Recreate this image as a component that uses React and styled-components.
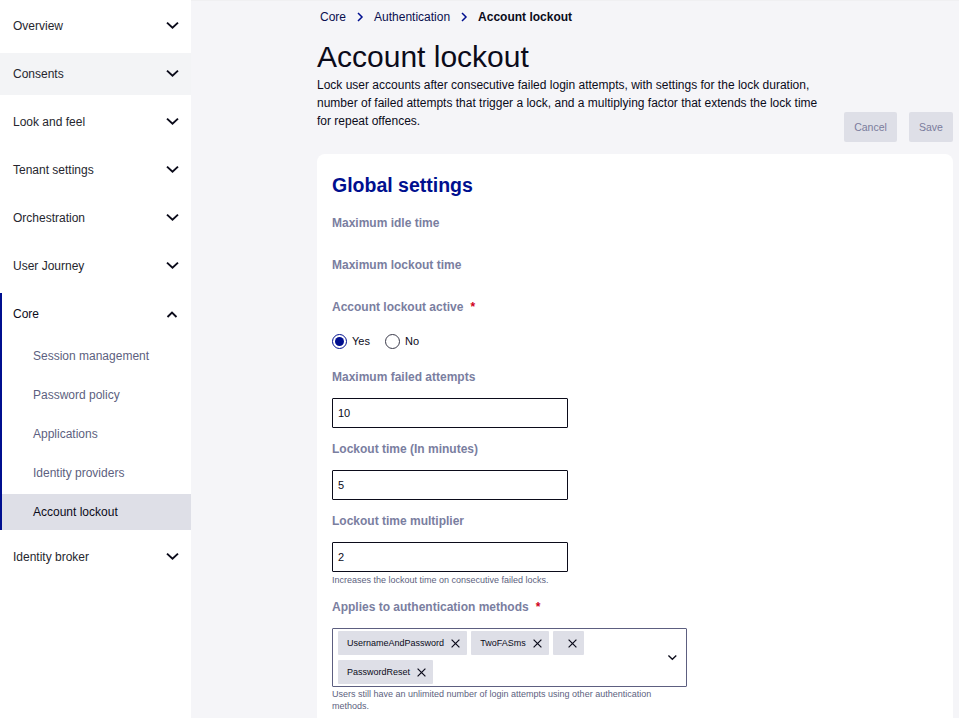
import React from "react";
import styled, { createGlobalStyle } from "styled-components";

const Global = createGlobalStyle`
  html, body { margin: 0; padding: 0; height: 718px; overflow: hidden; background: #f5f5f8; }
  body { font-family: "Liberation Sans", Arial, sans-serif; color: #0b0b1a; }
  * { box-sizing: border-box; }
`;

const Page = styled.div`
  display: flex;
  height: 718px;
  overflow: hidden;
  box-shadow: inset 0 1px 0 #f0f0f2;
`;

const Sidebar = styled.nav`
  width: 191px;
  flex: none;
  background: #fff;
  padding-top: 5px;
  display: flex;
  flex-direction: column;
  gap: 6px;
`;

const NavGroup = styled.div`
  display: flex;
  flex-direction: column;
  gap: ${(p) => (p.$open ? "3px" : "0")};
  border-left: ${(p) => (p.$open ? "2px solid #000f8f" : "none")};
`;

const NavHead = styled.div`
  height: 42px;
  display: flex;
  align-items: center;
  justify-content: space-between;
  padding: 0 12px 0 ${(p) => (p.$open ? "11px" : "13px")};
  font-size: 12px;
  color: ${(p) => (p.$open ? "#0b0b1a" : "#26262e")};
  background: ${(p) => (p.$hover ? "#f3f4f6" : "transparent")};
`;

const SubItem = styled.div`
  height: 36px;
  display: flex;
  align-items: center;
  padding-left: 31px;
  font-size: 12px;
  color: ${(p) => (p.$active ? "#0b0b1a" : "#5d5f80")};
  background: ${(p) => (p.$active ? "#dedfe7" : "transparent")};
`;

const Main = styled.main`
  flex: 1;
  min-width: 0;
  padding: 0 6px 0 126px;
`;

const Crumbs = styled.div`
  display: flex;
  align-items: center;
  height: 34px;
  padding-left: 3px;
  font-size: 12px;
  color: #0a0f4f;
`;

const CrumbSep = styled.span`
  display: flex;
  width: 28px;
  justify-content: center;
`;

const CrumbCurrent = styled.b`
  color: #0b0b1a;
`;

const Title = styled.h1`
  margin: 5px 0 2px;
  font-size: 30px;
  line-height: 35px;
  font-weight: 400;
  color: #0b0b1a;
`;

const Description = styled.p`
  margin: 0;
  font-size: 12px;
  line-height: 18px;
  color: #0b0b1a;
  width: 510px;
`;

const Actions = styled.div`
  display: flex;
  justify-content: flex-end;
  gap: 12px;
  margin-top: -18px;
`;

const ActionButton = styled.button`
  height: 30px;
  width: ${(p) => p.$w}px;
  padding: 0;
  border: none;
  border-radius: 2px;
  background: #dedfe7;
  color: #7a7c9c;
  font: 10.5px "Liberation Sans", Arial, sans-serif;
`;

const Card = styled.section`
  margin-top: 12px;
  background: #fff;
  border-radius: 8px 8px 0 0;
  padding: 20px 15px 0;
  height: 600px;
`;

const CardTitle = styled.h2`
  margin: 0;
  font-size: 19.5px;
  line-height: 23px;
  font-weight: 700;
  color: #000f8f;
`;

const Label = styled.div`
  margin-top: ${(p) => p.$mt ?? 0}px;
  font-size: 12px;
  line-height: 14px;
  font-weight: 700;
  color: #7a7e9f;
`;

const Star = styled.span`
  color: #d0021b;
  margin-left: 7px;
`;

const RadioRow = styled.div`
  display: flex;
  align-items: center;
  margin-top: 19px;
  height: 16px;
  font-size: 11px;
  color: #0b0b1a;
`;

const RadioOption = styled.label`
  display: flex;
  align-items: center;
  gap: 5px;
  margin-right: 15px;
`;

const RadioDot = styled.span`
  width: 15px;
  height: 15px;
  border-radius: 50%;
  border: 1px solid ${(p) => (p.$on ? "#000f8f" : "#3a3a4a")};
  display: flex;
  align-items: center;
  justify-content: center;
  &::after {
    content: "";
    width: 9px;
    height: 9px;
    border-radius: 50%;
    background: ${(p) => (p.$on ? "#000f8f" : "transparent")};
  }
`;

const Input = styled.div`
  margin-top: 14px;
  width: 236px;
  height: 30px;
  border: 1px solid #0b0b1a;
  border-radius: 1px;
  padding-left: 5px;
  display: flex;
  align-items: center;
  font-size: 11px;
  color: #0b0b1a;
`;

const Help = styled.div`
  margin-top: ${(p) => p.$mt ?? 0}px;
  font-size: 9px;
  line-height: 12px;
  color: #5d5f80;
  width: 355px;
`;

const Select = styled.div`
  margin-top: 14px;
  width: 355px;
  height: 59px;
  border: 1px solid #5d5f80;
  border-radius: 1px;
  display: flex;
  align-items: center;
  padding: 2px 9px 2px 5px;
`;

const Chips = styled.div`
  flex: 1;
  display: flex;
  flex-wrap: wrap;
  gap: 5px 4.25px;
`;

const Chip = styled.div`
  height: 24px;
  min-width: 31px;
  display: flex;
  align-items: center;
  justify-content: flex-end;
  gap: 7px;
  padding: 0 7px 0 9px;
  background: #dedfe7;
  border-radius: 1px;
  font-size: 9px;
  color: #0b0b1a;
`;

const Chevron = ({ up, size = 14 }) => (
  <svg width={size} height={size} viewBox="0 0 14 14" fill="none" stroke="#0b0b1a" strokeWidth="1.9">
    <path d={up ? "M2.5 10 7 5.5l4.5 4.5" : "M2 3.6 7.5 8.8 13 3.6"} />
  </svg>
);

const CrumbArrow = () => (
  <svg width="8" height="10" viewBox="0 0 8 10" fill="none" stroke="#000f8f" strokeWidth="1.5">
    <path d="M2 1l4 4-4 4" />
  </svg>
);

const Cross = () => (
  <svg width="9" height="9" viewBox="0 0 9 9" fill="none" stroke="#0b0b1a" strokeWidth="1.2">
    <path d="M.6.6l7.8 7.8M8.4.6.6 8.4" />
  </svg>
);

const top = ["Overview", "Consents", "Look and feel", "Tenant settings", "Orchestration", "User Journey"];
const subs = ["Session management", "Password policy", "Applications", "Identity providers", "Account lockout"];
const chips = ["UsernameAndPassword", "TwoFASms", "", "PasswordReset"];

export default function App() {
  return (
    <Page>
      <Global />
      <Sidebar>
        {top.map((t) => (
          <NavGroup key={t}>
            <NavHead $hover={t === "Consents"}>
              {t}
              <Chevron />
            </NavHead>
          </NavGroup>
        ))}
        <NavGroup $open>
          <NavHead $open>
            Core
            <Chevron up />
          </NavHead>
          {subs.map((s) => (
            <SubItem key={s} $active={s === "Account lockout"}>
              {s}
            </SubItem>
          ))}
        </NavGroup>
        <NavGroup>
          <NavHead>
            Identity broker
            <Chevron />
          </NavHead>
        </NavGroup>
      </Sidebar>
      <Main>
        <Crumbs>
          Core
          <CrumbSep><CrumbArrow /></CrumbSep>
          Authentication
          <CrumbSep><CrumbArrow /></CrumbSep>
          <CrumbCurrent>Account lockout</CrumbCurrent>
        </Crumbs>
        <Title>Account lockout</Title>
        <Description>
          Lock user accounts after consecutive failed login attempts, with settings for the lock duration,
          number of failed attempts that trigger a lock, and a multiplying factor that extends the lock time
          for repeat offences.
        </Description>
        <Actions>
          <ActionButton $w={53}>Cancel</ActionButton>
          <ActionButton $w={44}>Save</ActionButton>
        </Actions>
        <Card>
          <CardTitle>Global settings</CardTitle>
          <Label $mt={19}>Maximum idle time</Label>
          <Label $mt={28}>Maximum lockout time</Label>
          <Label $mt={28}>
            Account lockout active<Star>*</Star>
          </Label>
          <RadioRow>
            <RadioOption>
              <RadioDot $on />
              Yes
            </RadioOption>
            <RadioOption>
              <RadioDot />
              No
            </RadioOption>
          </RadioRow>
          <Label $mt={21}>Maximum failed attempts</Label>
          <Input>10</Input>
          <Label $mt={14}>Lockout time (In minutes)</Label>
          <Input>5</Input>
          <Label $mt={14}>Lockout time multiplier</Label>
          <Input>2</Input>
          <Help $mt={2}>Increases the lockout time on consecutive failed locks.</Help>
          <Label $mt={14}>
            Applies to authentication methods<Star>*</Star>
          </Label>
          <Select>
            <Chips>
              {chips.map((c, i) => (
                <Chip key={i}>
                  {c}
                  <Cross />
                </Chip>
              ))}
            </Chips>
            <Chevron size={10} />
          </Select>
          <Help $mt={1}>Users still have an unlimited number of login attempts using other authentication methods.</Help>
        </Card>
      </Main>
    </Page>
  );
}
